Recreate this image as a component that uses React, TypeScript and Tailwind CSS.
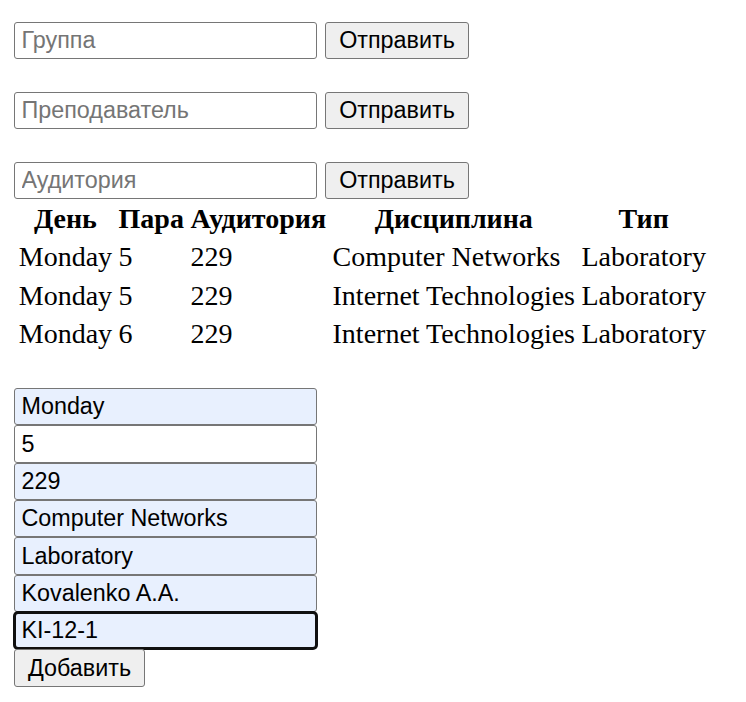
const ROWS = [
  { day: "Monday", pair: "5", room: "229", subject: "Computer Networks", type: "Laboratory" },
  { day: "Monday", pair: "5", room: "229", subject: "Internet Technologies", type: "Laboratory" },
  { day: "Monday", pair: "6", room: "229", subject: "Internet Technologies", type: "Laboratory" },
];

const FIELDS = [
  { value: "Monday", filled: true },
  { value: "5", filled: false },
  { value: "229", filled: true },
  { value: "Computer Networks", filled: true },
  { value: "Laboratory", filled: true },
  { value: "Kovalenko A.A.", filled: true },
];

const sans = { fontFamily: "'Liberation Sans', Arial, sans-serif" };

function SearchRow({ placeholder }: { placeholder: string }) {
  return (
    <div className="flex items-center gap-[8px]">
      <input
        type="text"
        placeholder={placeholder}
        className="box-border h-[37.33px] w-[303px] rounded-[3px] border border-[#767676] bg-white px-[6.5px] text-[23.33px] text-black outline-none placeholder:text-[#757575]"
        style={sans}
      />
      <button
        className="box-border h-[37.33px] w-[144px] rounded-[3px] border border-[#767676] bg-[#efefef] text-[23.33px] text-black"
        style={sans}
      >
        Отправить
      </button>
    </div>
  );
}

export default function App() {
  return (
    <div className="min-h-screen bg-white pl-[14px] pt-[22px] text-black">
      <div className="flex flex-col gap-[32.7px]">
        <SearchRow placeholder="Группа" />
        <SearchRow placeholder="Преподаватель" />
        <SearchRow placeholder="Аудитория" />
      </div>

      <table
        className="-mt-[1.25px] border-separate border-spacing-[3.5px]"
        style={{ fontFamily: "'Liberation Serif', 'Times New Roman', serif" }}
      >
        <thead>
          <tr>
            {["День", "Пара", "Аудитория", "Дисциплина", "Тип"].map((h) => (
              <th key={h} className="p-[1.75px] text-center text-[28px] font-bold leading-[32px]">
                {h}
              </th>
            ))}
          </tr>
        </thead>
        <tbody>
          {ROWS.map((r, i) => (
            <tr key={i}>
              {[r.day, r.pair, r.room, r.subject, r.type].map((c, j) => (
                <td key={j} className="p-[1.75px] text-left text-[28px] leading-[32px]">
                  {c}
                </td>
              ))}
            </tr>
          ))}
        </tbody>
      </table>

      <div className="mt-[33px] flex flex-col items-start">
        {FIELDS.map((f, i) => (
          <input
            key={i}
            type="text"
            defaultValue={f.value}
            className={`box-border h-[37.33px] w-[303px] rounded-[3px] border border-[#767676] px-[6.5px] text-[23.33px] text-black outline-none ${
              f.filled ? "bg-[#e8f0fe]" : "bg-white"
            }`}
            style={sans}
          />
        ))}
        <input
          type="text"
          defaultValue="KI-12-1"
          className="box-border h-[37.33px] w-[303px] rounded-[4px] border-2 border-[#101010] bg-[#e8f0fe] px-[5.5px] text-[23.33px] text-black shadow-[0_0_0_1px_#101010] outline-none"
          style={sans}
        />
        <button
          className="box-border h-[37.33px] w-[131px] rounded-[3px] border border-[#767676] bg-[#efefef] text-[23.33px] text-black"
          style={sans}
        >
          Добавить
        </button>
      </div>
    </div>
  );
}
